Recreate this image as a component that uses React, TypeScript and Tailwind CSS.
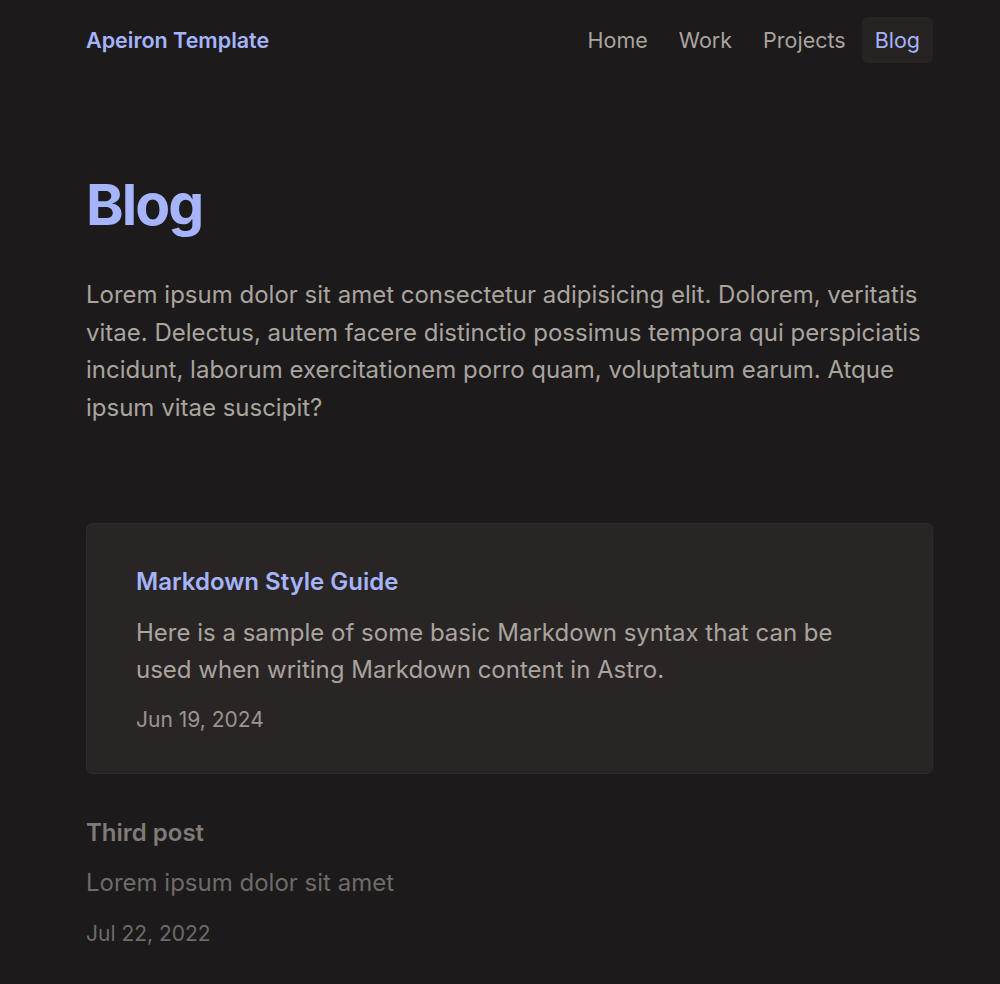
const font = { fontFamily: "Inter, 'Noto Sans', sans-serif" };

type Post = { title: string; description: string; date: string; featured?: boolean };

const posts: Post[] = [
  {
    title: "Markdown Style Guide",
    description:
      "Here is a sample of some basic Markdown syntax that can be used when writing Markdown content in Astro.",
    date: "Jun 19, 2024",
    featured: true,
  },
  {
    title: "Third post",
    description: "Lorem ipsum dolor sit amet",
    date: "Jul 22, 2022",
  },
];

const links = ["Home", "Work", "Projects", "Blog"];

export default function App() {
  return (
    <div style={font} className="min-h-[984px] bg-[#1c1a1a] pl-[86px] pr-[67px] text-[#a8a29e]">
      <header className="flex h-[80px] items-center justify-between">
        <a className="text-[21.5px] font-semibold text-[#a5b4fc]">Apeiron Template</a>
        <nav className="flex items-center gap-[1px]">
          {links.map((l) => (
            <a
              key={l}
              className={
                l === "Blog"
                  ? "rounded-md bg-[#262322] px-[13px] py-[7px] text-[21.5px] text-[#a5b4fc]"
                  : "px-[15px] py-[7px] text-[21.5px] text-[#aaa49f]"
              }
            >
              {l}
            </a>
          ))}
        </nav>
      </header>

      <main>
        <h1 className="mt-[96px] text-[57px] font-bold leading-none tracking-[-0.035em] text-[#a5b4fc]">
          Blog
        </h1>
        <p className="mt-[43px] text-[24px] leading-[37.5px] text-[#aaa49f]">
          Lorem ipsum dolor sit amet consectetur adipisicing elit. Dolorem, veritatis vitae. Delectus,
          autem facere distinctio possimus tempora qui perspiciatis incidunt, laborum exercitationem
          porro quam, voluptatum earum. Atque ipsum vitae suscipit?
        </p>

        <ul className="mt-[97px] flex flex-col gap-[41px]">
          {posts.map((p) => (
            <li
              key={p.title}
              className={
                p.featured
                  ? "rounded-md border border-[#2f2b2a] bg-[#292525] px-[49px] pt-[40px] pb-[37px]"
                  : ""
              }
            >
              <h2
                className={
                  p.featured
                    ? "text-[24px] font-semibold text-[#a5b4fc]"
                    : "text-[24px] font-semibold text-[#807b78]"
                }
              >
                {p.title}
              </h2>
              <p
                className={
                  p.featured
                    ? "mt-[14px] text-[24px] leading-[37px] text-[#aaa49f]"
                    : "mt-[13px] text-[24px] leading-[37px] text-[#6f6b68]"
                }
              >
                {p.description}
              </p>
              <p
                className={
                  p.featured
                    ? "mt-[16px] text-[21px] text-[#9a9591]"
                    : "mt-[17px] text-[21px] text-[#6f6b68]"
                }
              >
                {p.date}
              </p>
            </li>
          ))}
        </ul>
      </main>
    </div>
  );
}
